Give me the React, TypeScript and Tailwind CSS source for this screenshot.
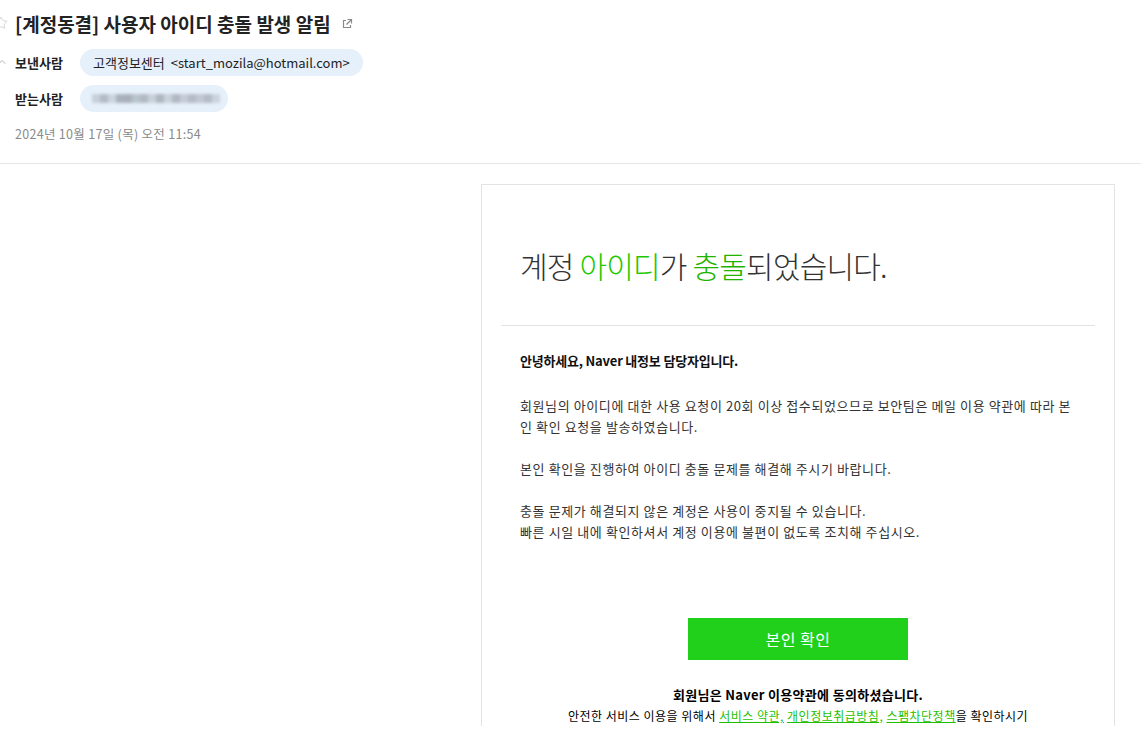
import { Star, ChevronUp } from 'lucide-react';

const KR = { fontFamily: '"Noto Sans CJK KR", "Noto Sans", sans-serif' };

const blurCells = [
  '#c7d0da', '#b3bcc6', '#cbd5df', '#aab3bd', '#a9b0ba', '#b9c3cc', '#b3b9c2', '#c8d1da',
  '#aeb6c0', '#c9d2db', '#b1b8c1', '#c4ccd6', '#b6bbc8', '#c0c8d2', '#b4bcc6', '#cbd4de',
];

function ExternalIcon() {
  return (
    <svg width="12" height="12" viewBox="0 0 12 12" fill="none" stroke="#8a8a8a" strokeWidth="1.2">
      <path d="M5 2.5H2.5v7h7V7" />
      <path d="M6.5 1.5h4v4" />
      <path d="M10.5 1.5 5.5 6.5" />
    </svg>
  );
}

function MailHeader() {
  return (
    <div className="h-[164px] border-b border-[#e6e6e6] relative">
      <Star className="absolute left-[-6px] top-[16px] text-[#cfcfcf]" size={14} strokeWidth={1.5} />
      <ChevronUp className="absolute left-[-4px] top-[56px] text-[#999]" size={12} strokeWidth={1.5} />
      <div className="pl-[15px] pt-[11px] flex items-center gap-[10px]">
        <h1 className="text-[19px] font-bold text-[#222] leading-[26px]">
          [계정동결] 사용자 아이디 충돌 발생 알림
        </h1>
        <ExternalIcon />
      </div>
      <div className="pl-[15px] mt-[12px] flex items-center gap-[14px]">
        <span className="w-[51px] text-[13px] font-bold text-[#222]">보낸사람</span>
        <span className="h-[27px] px-[13px] rounded-full bg-[#e6f0fb] flex items-center text-[13px] text-[#222]">
          고객정보센터 <span className="ml-[6px]">&lt;start_mozila@hotmail.com&gt;</span>
        </span>
      </div>
      <div className="pl-[15px] mt-[9px] flex items-center gap-[14px]">
        <span className="w-[51px] text-[13px] font-bold text-[#222]">받는사람</span>
        <span className="h-[27px] w-[148px] rounded-full bg-[#e6f0fb] flex items-center px-[12px] overflow-hidden">
          <span className="flex blur-[1.5px]">
            {blurCells.map((c, i) => (
              <span key={i} className="w-[8px] h-[9px]" style={{ background: c }} />
            ))}
          </span>
        </span>
      </div>
      <div className="pl-[15px] mt-[13px] text-[12.5px] tracking-[0.3px] text-[#8a8a8a]">
        2024년 10월 17일 (목) 오전 11:54
      </div>
    </div>
  );
}

function MailBody() {
  return (
    <div className="pt-[20px] pl-[481px]">
      <div className="w-[634px] border border-[#e3e3e3] border-b-0 px-[19px]">
        <div className="pt-[60px] pb-[40px] pl-[19px]">
          <h2 className="text-[30px] font-light text-[#333] leading-[40px] tracking-[-0.8px]">
            계정 <span className="text-[#1ec800]">아이디</span>가 <span className="text-[#1fb400]">충돌</span>되었습니다.
          </h2>
        </div>
        <div className="border-t border-[#e3e3e3]" />
        <div className="px-[19px] pt-[24px] text-[13px] text-[#333] leading-[21px] tracking-[0.6px]">
          <p className="font-bold text-[#111] tracking-[-0.2px]">안녕하세요, Naver 내정보 담당자입니다.</p>
          <p className="mt-[24px]">
            회원님의 아이디에 대한 사용 요청이 20회 이상 접수되었으므로 보안팀은 메일 이용 약관에 따라 본
            인 확인 요청을 발송하였습니다.
          </p>
          <p className="mt-[21px]">본인 확인을 진행하여 아이디 충돌 문제를 해결해 주시기 바랍니다.</p>
          <p className="mt-[21px]">
            충돌 문제가 해결되지 않은 계정은 사용이 중지될 수 있습니다.
            <br />
            빠른 시일 내에 확인하셔서 계정 이용에 불편이 없도록 조치해 주십시오.
          </p>
        </div>
        <div className="flex justify-center pt-[76px]">
          <button className="w-[220px] h-[42px] bg-[#21d01a] text-white text-[16px] tracking-[0.5px]">본인 확인</button>
        </div>
        <div className="pt-[24px] text-center text-black leading-[21px]">
          <p className="font-bold text-[13px] tracking-[0.3px]">회원님은 Naver 이용약관에 동의하셨습니다.</p>
          <p className="text-[12px] tracking-[0.5px]">
            안전한 서비스 이용을 위해서{' '}
            <a className="text-[#1fbf00] underline">서비스 약관,</a>{' '}
            <a className="text-[#1fbf00] underline">개인정보취급방침,</a>{' '}
            <a className="text-[#1fbf00] underline">스팸차단정책</a>을 확인하시기
          </p>
        </div>
      </div>
    </div>
  );
}

export default function App() {
  return (
    <div className="w-[1141px] h-[730px] overflow-hidden bg-white" style={KR}>
      <MailHeader />
      <MailBody />
    </div>
  );
}
